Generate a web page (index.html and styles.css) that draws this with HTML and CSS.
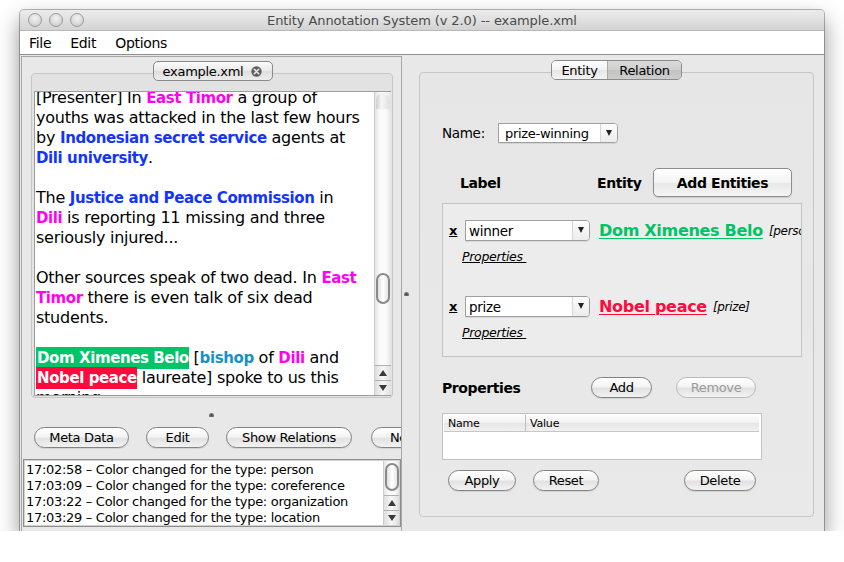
FILE: index.html
```html
<!DOCTYPE html>
<html>
<head>
<meta charset="utf-8">
<link rel="stylesheet" href="styles.css">
</head>
<body>
<div class="window">
  <div class="titlebar">
    <div class="lights"><span class="light"></span><span class="light"></span><span class="light"></span></div>
    <div class="title">Entity Annotation System (v 2.0) -- example.xml</div>
    <div></div>
  </div>
  <div class="menubar"><span class="menu m-file">File</span><span class="menu m-edit">Edit</span><span class="menu">Options</span></div>
  <div class="main">
    <div class="left">
      <div class="tabs">
        <div class="tab">example.xml
          <svg class="tabclose" width="11" height="11" viewBox="0 0 11 11"><circle cx="5.5" cy="5.5" r="5.2" fill="#5f5f5f"/><path d="M3.3 3.3 L7.7 7.7 M7.7 3.3 L3.3 7.7" stroke="#e8e8e8" stroke-width="1.6" stroke-linecap="round"/></svg>
        </div>
      </div>
      <div class="tabbox">
        <div class="textarea">
          <div class="doc">
            <div class="ln">[Presenter] In <b class="loc">East Timor</b> a group of</div>
            <div class="ln">youths was attacked in the last few hours</div>
            <div class="ln">by <b class="org">Indonesian secret service</b> agents at</div>
            <div class="ln"><b class="org">Dili university</b>.</div>
            <div class="ln">&nbsp;</div>
            <div class="ln">The <b class="org">Justice and Peace Commission</b> in</div>
            <div class="ln"><b class="loc">Dili</b> is reporting 11 missing and three</div>
            <div class="ln">seriously injured...</div>
            <div class="ln">&nbsp;</div>
            <div class="ln">Other sources speak of two dead. In <b class="loc">East</b></div>
            <div class="ln"><b class="loc">Timor</b> there is even talk of six dead</div>
            <div class="ln">students.</div>
            <div class="ln">&nbsp;</div>
            <div class="ln"><b class="hl-green">Dom Ximenes Belo</b> [<b class="role">bishop</b> of <b class="loc">Dili</b> and</div>
            <div class="ln"><b class="hl-red">Nobel peace</b> laureate] spoke to us this</div>
            <div class="ln">morning:</div>
          </div>
          <div class="vscroll big">
            <div class="cap"></div>
            <div class="track"><div class="thumb"></div></div>
            <div class="arrow up"><span></span></div>
            <div class="arrow down"><span></span></div>
          </div>
        </div>
      </div>
      <div class="hsplit"><span class="grip"></span></div>
      <div class="btnrow">
        <span class="btn w-meta">Meta Data</span>
        <span class="btn w-edit">Edit</span>
        <span class="btn w-show">Show Relations</span>
        <span class="btn w-new">New</span>
      </div>
      <div class="log">
        <div class="logtext">
          <div>17:02:58 – Color changed for the type: person</div>
          <div>17:03:09 – Color changed for the type: coreference</div>
          <div>17:03:22 – Color changed for the type: organization</div>
          <div>17:03:29 – Color changed for the type: location</div>
        </div>
        <div class="vscroll small">
          <div class="track"><div class="thumb"></div></div>
          <div class="arrow up"><span></span></div>
          <div class="arrow down"><span></span></div>
        </div>
      </div>
    </div>
    <div class="vsplit"><span class="grip"></span></div>
    <div class="right">
      <div class="tabs">
        <div class="seg">
          <span class="seg-item">Entity</span><span class="seg-item sel">Relation</span>
        </div>
      </div>
      <div class="rbox">
        <div class="namerow">
          <span class="lbl">Name:</span>
          <span class="combo c-name"><span class="cval">prize-winning</span><span class="cbtn"><i></i></span></span>
        </div>
        <div class="labelrow">
          <span class="hdr h-label">Label</span>
          <span class="hdr h-entity">Entity</span>
          <span class="sqbtn">Add Entities</span>
        </div>
        <div class="entbox">
          <div class="erow">
            <span class="ex">x</span>
            <span class="combo c-role"><span class="cval">winner</span><span class="cbtn"><i></i></span></span>
            <span class="ename green">Dom Ximenes Belo</span>
            <span class="etype">[person]</span>
          </div>
          <div class="eprops">Properties&nbsp;</div>
          <div class="erow second">
            <span class="ex">x</span>
            <span class="combo c-role"><span class="cval">prize</span><span class="cbtn"><i></i></span></span>
            <span class="ename red">Nobel peace</span>
            <span class="etype">[prize]</span>
          </div>
          <div class="eprops">Properties&nbsp;</div>
        </div>
        <div class="proprow">
          <span class="hdr h-props">Properties</span>
          <span class="btn w-add">Add</span>
          <span class="btn w-remove disabled">Remove</span>
        </div>
        <div class="table">
          <div class="thead"><span class="th th-name">Name</span><span class="th">Value</span></div>
          <div class="tbody"></div>
        </div>
        <div class="bottomrow">
          <span class="btn w-apply">Apply</span>
          <span class="btn w-reset">Reset</span>
          <span class="btn w-delete">Delete</span>
        </div>
      </div>
    </div>
  </div>
</div>
</body>
</html>
```
FILE: styles.css
```css
* { box-sizing: border-box; }
body {
  margin: 0;
  background: #ffffff;
  font-family: "DejaVu Sans", "Noto Sans", sans-serif;
  color: #000;
}
.window {
  margin: 10px 0 0 20px;
  width: 804px;
  height: 521px;
  background: #e8e8e8;
  display: flex;
  flex-direction: column;
  border-radius: 4px 4px 0 0;
  box-shadow: 0 0 0 1px rgba(0,0,0,0.28), 0 10px 22px rgba(0,0,0,0.45);
  overflow: hidden;
}
.titlebar {
  height: 21px;
  flex: none;
  display: grid;
  grid-template-columns: 1fr auto 1fr;
  align-items: center;
  background: linear-gradient(#ececec, #d3d3d3);
  border-bottom: 1px solid #b9b9b9;
}
.lights { display: flex; gap: 7px; padding-left: 8px; }
.light {
  width: 14px; height: 14px; border-radius: 50%;
  background: radial-gradient(circle at 50% 35%, #f4f4f4 0%, #dadada 55%, #c4c4c4 100%);
  border: 1px solid #9b9b9b;
}
.title { font-size: 13px; color: #4a4a4a; letter-spacing: -0.1px; }
.menubar {
  height: 24px;
  flex: none;
  background: #fff;
  border-bottom: 1px solid #8e8e8e;
  display: flex;
  align-items: center;
  padding-left: 9px;
  font-size: 14px;
  letter-spacing: -0.3px;
}
.menu { margin-right: 19px; }
.main { flex: 1; display: flex; min-height: 0; padding-top: 1px; }
.left {
  width: 381px;
  margin-left: 1px;
  border: 1px solid #a6a6a6;
  border-bottom: none;
  display: flex;
  flex-direction: column;
  flex: none;
}
.tabs { display: flex; justify-content: center; padding-top: 4px; position: relative; z-index: 2; }
.left .tabs { padding-left: 2px; }
.tab {
  height: 20px;
  width: 120px;
  border: 1px solid #8a8a8a;
  border-radius: 5px;
  background: linear-gradient(#fbfbfb, #e9e9e9 50%, #dedede 51%, #ececec);
  font-size: 13px;
  letter-spacing: -0.3px;
  display: flex;
  align-items: center;
  justify-content: center;
  gap: 8px;
}
.tabbox {
  margin: -8px 8px 0 9px;
  height: 325px;
  border: 1px solid #c6c6c6;
  border-radius: 4px;
  background: linear-gradient(#e2e2e2, #e4e4e4);
  padding: 17px 1px 1px 2px;
  flex: none;
}
.textarea {
  height: 100%;
  display: flex;
  background: #fff;
  border: 1px solid #9c9c9c;
  border-right: none;
}
.doc {
  flex: 1;
  overflow: hidden;
  padding-left: 1px;
  font-size: 16px;
  letter-spacing: -0.25px;
  line-height: 20px;
  white-space: nowrap;
}
.doc .ln:first-child { margin-top: -4px; }
.doc b { font-weight: bold; font-size: 15px; letter-spacing: -0.4px; }
.loc { color: #ff00f0; }
.org { color: #1234ff; }
.role { color: #1892c4; }
.hl-green { background: #00c468; color: #fff; padding: 2px 0 2px 1px; }
.hl-red { background: #ff0a3d; color: #fff; padding: 2px 0 2px 1px; }

.vscroll {
  width: 17px;
  flex: none;
  display: flex;
  flex-direction: column;
  border-left: 1px solid #cdcdcd;
  background: linear-gradient(90deg, #e4e4e4, #fafafa 30%, #fafafa 70%, #e4e4e4);
}
.vscroll .cap {
  height: 16px;
  border-radius: 8px 8px 0 0;
  background: linear-gradient(90deg, #cfcfcf, #f6f6f6 40%, #e0e0e0);
  margin: 1px 1px 0 1px;
}
.vscroll .track { flex: 1; position: relative; }
.vscroll .thumb {
  width: 14px;
  margin-left: 1px;
  border: 2px solid #8a8a8a;
  border-radius: 7px;
  background: linear-gradient(90deg, #e0e0e0, #ffffff 50%, #e4e4e4);
}
.big .thumb { margin-top: 164px; height: 31px; }
.small .thumb { margin-top: 2px; height: 28px; }
.vscroll .arrow {
  height: 15px;
  border-top: 1px solid #b0b0b0;
  display: flex;
  align-items: center;
  justify-content: center;
  background: linear-gradient(90deg, #dedede, #f7f7f7 50%, #dedede);
}
.arrow span { width: 0; height: 0; border-left: 4px solid transparent; border-right: 4px solid transparent; }
.arrow.up span { border-bottom: 6px solid #3a3a3a; }
.arrow.down span { border-top: 6px solid #3a3a3a; }

.hsplit { height: 29px; display: flex; justify-content: center; align-items: center; padding-top: 4px; flex: none; }
.grip {
  width: 5px; height: 4px; border-radius: 3px 3px 1px 1px;
  background: radial-gradient(circle at 50% 60%, #444, #999);
}
.btnrow {
  display: flex;
  overflow: hidden;
  padding-left: 12px;
  height: 22px;
  flex: none;
  white-space: nowrap;
}
.btn {
  height: 21px;
  border: 1px solid #828282;
  border-radius: 11px;
  background: linear-gradient(#ffffff, #f4f4f4 45%, #e2e2e2 55%, #f2f2f2);
  font-size: 13px;
  letter-spacing: -0.35px;
  display: inline-flex;
  align-items: center;
  justify-content: center;
  flex: none;
  box-shadow: 0 1px 1px rgba(0,0,0,0.1);
}
.w-meta { width: 95px; }
.w-edit { width: 63px; margin-left: 17px; }
.w-show { width: 126px; margin-left: 17px; }
.w-new { width: 70px; margin-left: 19px; justify-content: flex-start; padding-left: 18px; }
.log {
  margin: 10px 0 0 1px;
  height: 68px;
  border: 1px solid #8f8f8f;
  box-shadow: inset 0 0 0 1px #d2d2d2;
  background: #fff;
  display: flex;
  flex: none;
}
.logtext {
  flex: 1;
  padding: 2px 0 0 2px;
  font-size: 13px;
  letter-spacing: -0.3px;
  line-height: 16px;
  white-space: nowrap;
  overflow: hidden;
}
.small { width: 16px; margin: 1px 1px 1px 0; }

.vsplit { width: 17px; flex: none; display: flex; align-items: center; padding-left: 2px; }
.right {
  flex: 1;
  display: flex;
  flex-direction: column;
  padding-right: 10px;
}
.seg {
  height: 20px;
  display: flex;
  border: 1px solid #8a8a8a;
  border-radius: 5px;
  overflow: hidden;
  font-size: 13px;
  letter-spacing: -0.3px;
}
.seg-item {
  display: flex; align-items: center; justify-content: center;
  background: linear-gradient(#ffffff, #f1f1f1 50%, #e6e6e6 51%, #f3f3f3);
}
.seg-item:first-child { width: 55px; }
.seg-item.sel {
  width: 74px;
  border-left: 1px solid #a9a9a9;
  background: linear-gradient(#dadada, #cfcfcf 50%, #c3c3c3 51%, #cdcdcd);
}
.rbox {
  margin-top: -8px;
  height: 445px;
  border: 1px solid #c6c6c6;
  border-radius: 4px;
  background: linear-gradient(#e6e6e6, #e9e9e9);
  padding: 50px 0 0 22px;
  font-size: 13px;
}
.namerow { display: flex; align-items: center; height: 20px; }
.lbl { width: 56px; letter-spacing: -0.3px; font-size: 13.5px; }
.combo {
  display: inline-flex;
  height: 20px;
  border: 1px solid #9f9f9f;
  border-radius: 0 4px 4px 0;
  background: #fff;
  flex: none;
  box-shadow: 0 1px 0 rgba(0,0,0,0.08);
}
.c-name { width: 120px; }
.c-role { width: 125px; height: 21px; }
.cval { flex: 1; padding-left: 6px; font-size: 13px; letter-spacing: -0.3px; display: flex; align-items: center; }
.c-role .cval { padding-left: 3px; font-size: 13.5px; }
.cbtn {
  width: 17px;
  border-left: 1px solid #d6d6d6;
  background: linear-gradient(#fdfdfd, #ececec);
  display: flex; justify-content: center; padding-top: 6px;
  border-radius: 0 3px 3px 0;
}
.cbtn i { width: 0; height: 0; border-left: 3.5px solid transparent; border-right: 3.5px solid transparent; border-top: 6px solid #222; }
.labelrow { display: flex; align-items: center; margin-top: 25px; height: 29px; }
.hdr { font-weight: bold; font-size: 14px; letter-spacing: -0.4px; }
.h-label { margin-left: 18px; width: 137px; }
.h-entity { width: 56px; }
.sqbtn {
  width: 139px; height: 29px;
  border: 1px solid #8d8d8d;
  border-radius: 5px;
  background: linear-gradient(#ffffff, #f3f3f3 50%, #e8e8e8 51%, #f4f4f4);
  display: flex; align-items: center; justify-content: center;
  font-weight: bold; font-size: 14px; letter-spacing: -0.4px;
  box-shadow: 0 1px 1px rgba(0,0,0,0.12);
}
.entbox {
  margin-top: 6px;
  width: 360px;
  height: 154px;
  border: 1px solid #c3c3c3;
  background: #ececec;
  padding: 16px 0 0 6px;
  overflow: hidden;
  white-space: nowrap;
}
.erow { display: flex; align-items: center; height: 21px; }
.erow > * { flex: none; }
.erow.second { margin-top: 32px; }
.ex { font-weight: bold; text-decoration: underline; font-size: 13px; width: 16px; }
.ename { margin-left: 9px; font-weight: bold; font-size: 16px; letter-spacing: -0.3px; text-decoration: underline; text-decoration-thickness: 1px; text-underline-offset: 2px; }
.green { color: #00c464; }
.red { color: #ff0a3d; }
.etype { margin-left: 6px; font-style: italic; font-size: 12px; letter-spacing: -0.3px; }
.eprops { margin: 9px 0 0 13px; height: 14px; line-height: 14px; font-style: italic; font-size: 12.5px; letter-spacing: -0.3px; text-decoration: underline; }
.proprow { display: flex; align-items: center; margin-top: 20px; height: 21px; }
.h-props { width: 149px; }
.w-add { width: 61px; }
.w-remove { width: 80px; margin-left: 24px; }
.btn.disabled { color: #9a9a9a; border-color: #b9b9b9; box-shadow: none; }
.table {
  margin-top: 15px;
  width: 320px;
  height: 47px;
  border: 1px solid #c2c2c2;
  background: #fff;
  padding: 1px 2px 0 1px;
}
.thead {
  display: flex;
  height: 17px;
  background: linear-gradient(#fdfdfd, #f1f1f1 50%, #e6e6e6 51%, #f0f0f0);
  border-bottom: 1px solid #c6c6c6;
  font-size: 11px;
  letter-spacing: -0.2px;
}
.th { display: flex; align-items: center; padding-left: 4px; }
.th-name { width: 82px; border-right: 1px solid #bdbdbd; }
.bottomrow { display: flex; margin-top: 10px; padding-left: 6px; height: 21px; }
.w-apply { width: 68px; }
.w-reset { width: 66px; margin-left: 17px; }
.w-delete { width: 72px; margin-left: 85px; }
```
